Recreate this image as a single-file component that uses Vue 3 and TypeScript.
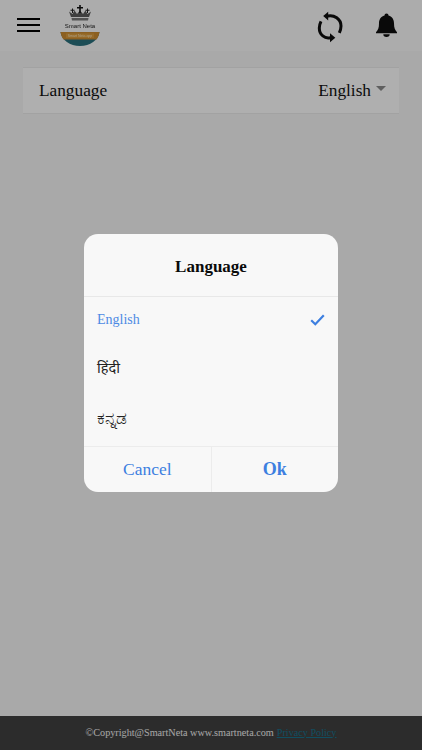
<script setup lang="ts">
import { ref } from 'vue';

const languages = [
  { code: 'en', label: 'English' },
  { code: 'hi', label: 'हिंदी' },
  { code: 'kn', label: 'ಕನ್ನಡ' }
];

const selected = ref('en');
</script>

<template>
  <div class="page">
    <header class="header">
      <button class="menu" type="button" aria-label="Menu">
        <span></span>
        <span></span>
        <span></span>
      </button>
      <svg class="logo" width="40" height="42" viewBox="0 0 40 42">
        <path d="M11 13 L9 7.500 L12.500 10 L14.500 6.500 L17 10 L20 6.500 L23 10 L25.500 6.500 L27.500 10 L31 7.500 L29 13 Z" fill="#5a5a5a" />
        <path d="M11.500 14 H28.500 L28 16.500 H12 Z" fill="#777" />
        <path d="M19.200 1 H20.800 V3 H23 V4.400 H20.800 V9 H19.200 V4.400 H17 V3 H19.200 Z" fill="#111" />
        <path d="M12 4.500 H13 V5.800 H14.500 V6.800 H13 V9 H12 V6.800 H10.500 V5.800 H12 Z" fill="#222" />
        <path d="M27 4.500 H28 V5.800 H29.500 V6.800 H28 V9 H27 V6.800 H25.500 V5.800 H27 Z" fill="#222" />
        <text x="20" y="24" text-anchor="middle" class="logo-text">Smart Neta</text>
        <path d="M0.500 28 H39.500 C38.500 36 30 42 20 42 C10 42 1.500 36 0.500 28 Z" fill="#2a6f7c" />
        <path d="M0.500 28 H39.500 C39 31 38 33.500 36.500 35.500 H3.500 C2 33.500 1 31 0.500 28 Z" fill="#c98a30" />
        <rect x="6" y="29.500" width="28" height="4.500" fill="#d89a3c" />
        <text x="20" y="33" text-anchor="middle" class="logo-sub">Smart Neta app</text>
      </svg>
      <div class="spacer"></div>
      <svg class="sync" width="26" height="34" viewBox="0 0 26 34" fill="none">
        <path d="M10.700 6 C17 4.500 24 9 24 16 C24 18.500 23.300 20.800 22.300 22.800" stroke="#0d0d0d" stroke-width="3" />
        <path d="M13.300 27.700 C8 29 2.300 25 2.300 18 C2.300 15.500 3 13.300 4 11.300" stroke="#0d0d0d" stroke-width="3" />
        <path d="M11.200 1.800 V10.500 L6.200 6 Z" fill="#0d0d0d" />
        <path d="M13 23.300 V32.300 L18.300 27.700 Z" fill="#0d0d0d" />
      </svg>
      <svg class="bell" width="21" height="24" viewBox="0 0 21 24">
        <path d="M10.500 0.500 A2 2 0 0 1 12.500 2.600 C16.500 3.600 18 7 18 10.500 C18 15 19 17 21 19.200 V20.200 H0 V19.200 C2 17 3 15 3 10.500 C3 7 4.500 3.600 8.500 2.600 A2 2 0 0 1 10.500 0.500 Z" fill="#0d0d0d" />
        <path d="M7.300 21.300 H13.700 A3.200 2.600 0 0 1 7.300 21.300 Z" fill="#0d0d0d" />
      </svg>
    </header>

    <main class="content">
      <div class="row">
        <span>Language</span>
        <span class="row-value">English<i class="caret"></i></span>
      </div>
    </main>

    <footer class="footer">
      <span>©Copyright@SmartNeta www.smartneta.com</span>
      <a class="policy">Privacy Policy</a>
    </footer>

    <div class="overlay">
      <div class="dialog">
        <h2 class="dialog-title">Language</h2>
        <ul class="options">
          <li
            v-for="lang in languages"
            :key="lang.code"
            :class="['option', lang.code, { active: selected === lang.code }]"
            @click="selected = lang.code"
          >
            <span>{{ lang.label }}</span>
            <svg v-if="selected === lang.code" width="15" height="12" viewBox="0 0 15 12" fill="none">
              <path d="M1.200 6.200 L5.300 10.200 L13.800 1.200" stroke="#3d7fe0" stroke-width="2.200" />
            </svg>
          </li>
        </ul>
        <div class="actions">
          <button class="action" type="button">Cancel</button>
          <button class="action action-ok" type="button">Ok</button>
        </div>
      </div>
    </div>
  </div>
</template>

<style>
html,
body {
  margin: 0;
  background: #fff;
}
</style>

<style scoped>
.page {
  position: relative;
  display: flex;
  flex-direction: column;
  width: 422px;
  height: 750px;
  overflow: hidden;
  background: #f2f2f2;
  font-family: 'Liberation Serif', 'Noto Sans', 'DejaVu Sans', serif;
}

.header {
  display: flex;
  align-items: center;
  height: 51px;
  padding: 0 25px 0 17px;
  box-sizing: border-box;
  background: #f6f6f6;
}

.menu {
  display: flex;
  flex-direction: column;
  gap: 3.500px;
  width: 23px;
  margin-bottom: 1px;
  padding: 0;
  border: 0;
  background: none;
}

.menu span {
  height: 2.500px;
  background: #000;
}

.logo {
  margin-left: 20px;
  margin-bottom: 1px;
  filter: blur(0.4px);
}

.logo-text {
  font-family: 'Liberation Sans', sans-serif;
  font-size: 6px;
  fill: #222;
}

.logo-sub {
  font-family: 'Liberation Sans', sans-serif;
  font-size: 3.500px;
  fill: #f6e2b8;
}

.spacer {
  flex: 1;
}

.sync {
  margin-top: 2px;
}

.bell {
  margin-left: 33px;
  margin-bottom: 1px;
}

.content {
  flex: 1;
  padding: 16px 23px 0;
}

.row {
  display: flex;
  align-items: center;
  justify-content: space-between;
  height: 47px;
  padding: 0 13px 0 16px;
  box-sizing: border-box;
  font-size: 17.300px;
  color: #111;
  background: #fbfbfb;
  border-top: 1px solid #e8e8e8;
  border-bottom: 1px solid #e8e8e8;
}

.row-value {
  display: flex;
  align-items: center;
}

.caret {
  width: 0;
  height: 0;
  margin: 0 0 4px 5px;
  border-left: 5px solid transparent;
  border-right: 5px solid transparent;
  border-top: 5px solid #888;
}

.footer {
  display: flex;
  align-items: center;
  justify-content: center;
  gap: 3px;
  height: 34px;
  padding-bottom: 2px;
  box-sizing: border-box;
  font-size: 10.200px;
  color: #eee;
  background: #404040;
}

.policy {
  color: #17708c;
  text-decoration: underline;
}

.overlay {
  position: absolute;
  inset: 0;
  display: flex;
  align-items: center;
  justify-content: center;
  padding-bottom: 24px;
  box-sizing: border-box;
  background: rgba(0, 0, 0, 0.3);
}

.dialog {
  width: 254px;
  height: 258px;
  display: flex;
  flex-direction: column;
  border-radius: 14px;
  background: #f8f8f8;
  overflow: hidden;
}

.dialog-title {
  height: 63px;
  margin: 0;
  font-size: 17px;
  font-weight: 700;
  line-height: 65px;
  text-align: center;
  color: #0a0a0a;
  border-bottom: 1px solid #e8e8e8;
  box-sizing: border-box;
}

.options {
  flex: 1;
  margin: 0;
  padding: 0;
  list-style: none;
}

.option {
  display: flex;
  align-items: center;
  justify-content: space-between;
  padding: 0 13px;
  font-size: 14px;
  color: #222;
}

.option.en {
  height: 45px;
}

.option.hi {
  height: 49px;
  font-size: 14.500px;
}

.option.kn {
  height: 55px;
  font-size: 17px;
}

.option.active {
  color: #4d8ae4;
}

.actions {
  display: flex;
  height: 46px;
  border-top: 1px solid #ececec;
  box-sizing: border-box;
}

.action {
  flex: 1;
  padding: 0;
  border: 0;
  background: none;
  font-family: inherit;
  font-size: 17.500px;
  color: #3d7fe0;
}

.action + .action {
  border-left: 1px solid #ececec;
}

.action-ok {
  font-weight: 700;
  font-size: 18px;
}
</style>
